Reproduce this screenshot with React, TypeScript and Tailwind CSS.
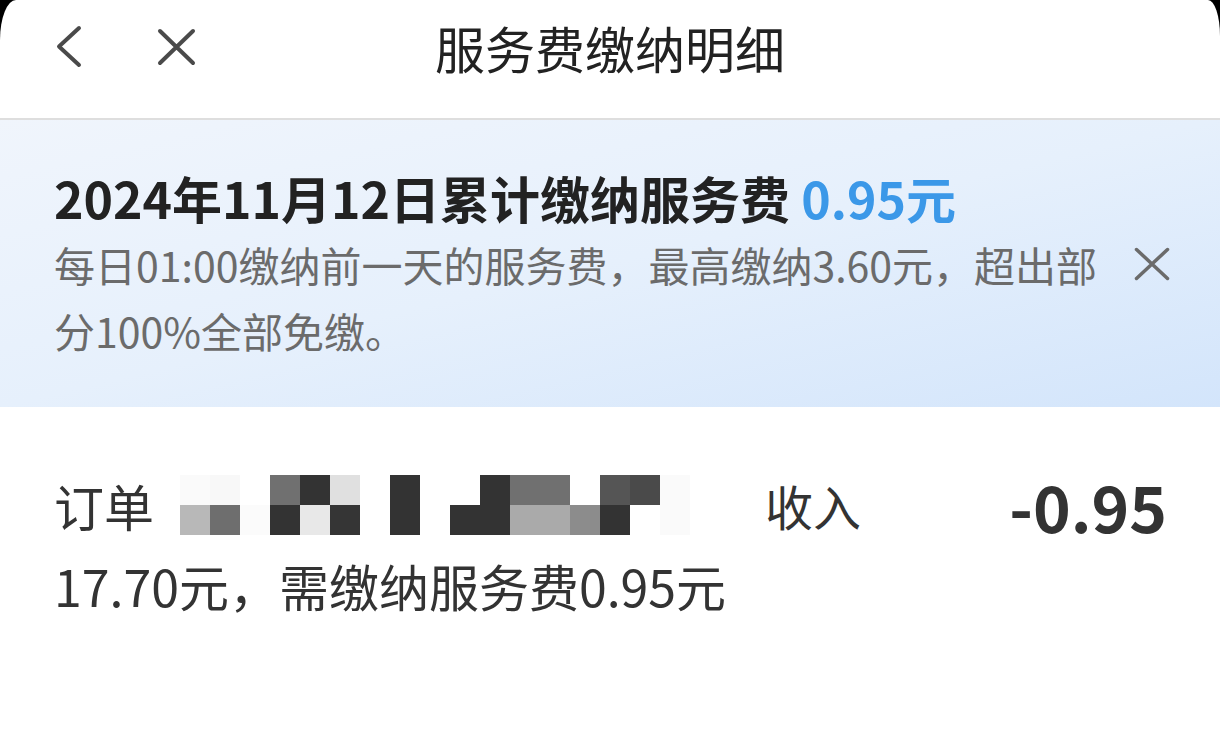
import React from 'react';

const font = "font-['Noto_Sans_CJK_SC','Noto_Sans',sans-serif]";

// mosaic over the order number, two rows of 30px cells
const mosaicTop = [
    'bg-[#fafafa]', 'bg-[#f8f8f8]', 'bg-white', 'bg-[#707070]', 'bg-[#333333]', 'bg-[#e0e0e0]',
    'bg-white', 'bg-[#333333]', 'bg-white', 'bg-white', 'bg-[#333333]', 'bg-[#707070]',
    'bg-[#707070]', 'bg-white', 'bg-[#555555]', 'bg-[#4a4a4a]', 'bg-[#fafafa]',
];
const mosaicBottom = [
    'bg-[#b8b8b8]', 'bg-[#6e6e6e]', 'bg-[#fbfbfb]', 'bg-[#333333]', 'bg-[#e8e8e8]', 'bg-[#353535]',
    'bg-white', 'bg-[#333333]', 'bg-white', 'bg-[#333333]', 'bg-[#333333]', 'bg-[#aaaaaa]',
    'bg-[#aaaaaa]', 'bg-[#8c8c8c]', 'bg-[#333333]', 'bg-white', 'bg-[#fafafa]',
];

function Mosaic() {
    return (
        <div className="flex flex-col">
            <div className="flex">
                {mosaicTop.map((c, i) => (
                    <div key={i} className={`w-[30px] h-[30px] ${c}`} />
                ))}
            </div>
            <div className="flex">
                {mosaicBottom.map((c, i) => (
                    <div key={i} className={`w-[30px] h-[30px] ${c}`} />
                ))}
            </div>
        </div>
    );
}

export default function App() {
    return (
        <div className={`w-[1220px] h-[745px] bg-black overflow-hidden ${font}`}>
            <div className="h-full bg-white rounded-tl-[16px_40px] rounded-tr-[12px_36px] flex flex-col">
                {/* Header */}
                <div className="h-[120px] border-b-2 border-[#dedede] shrink-0">
                    <div className="h-[94px] grid grid-cols-[1fr_auto_1fr] items-center">
                        <div className="flex items-center">
                            <svg width="28" height="46" viewBox="0 0 28 46" className="ml-[55px]">
                                <path d="M24 4 L4 22.5 L24 41" fill="none" stroke="#4a4a4a" strokeWidth="4" strokeLinecap="round" strokeLinejoin="round" />
                            </svg>
                            <svg width="41" height="40" viewBox="0 0 41 40" className="ml-[73px]">
                                <path d="M4 4 L37 36 M37 4 L4 36" fill="none" stroke="#4a4a4a" strokeWidth="4" strokeLinecap="round" />
                            </svg>
                        </div>
                        <h1 className="text-[50px] leading-none text-[#222222] font-normal">服务费缴纳明细</h1>
                        <div />
                    </div>
                </div>

                {/* Notice banner */}
                <div className="shrink-0 h-[287px] bg-gradient-to-br from-[#f0f5fc] via-[#e6f0fc] to-[#d3e5fb] pl-[54px] pr-[49px] pt-[45px]">
                    <div className="text-[50px] leading-[64px] font-bold text-[#222222] whitespace-nowrap">
                        2024年11月12日累计缴纳服务费 <span className="text-[#3b98e8]">0.95元</span>
                    </div>
                    <div className="mt-[2px] flex items-start justify-between">
                        <p className="text-[41px] leading-[66px] text-[#6b6b6b] whitespace-nowrap">
                            每日01:00缴纳前一天的服务费，最高缴纳3.60元，超出部
                            <br />
                            分100%全部免缴。
                        </p>
                        <svg width="38" height="36" viewBox="0 0 38 36" className="mt-[15px] shrink-0">
                            <path d="M3.5 3.5 L34.5 32.5 M34.5 3.5 L3.5 32.5" fill="none" stroke="#6b6b6b" strokeWidth="3.5" strokeLinecap="round" />
                        </svg>
                    </div>
                </div>

                {/* Order item */}
                <div className="pl-[54px] pr-[53px] pt-[66px]">
                    <div className="flex items-center h-[64px]">
                        <span className="w-[126px] text-[50px] leading-none text-[#333333]">订单</span>
                        <Mosaic />
                        <span className="ml-[75px] text-[48px] leading-none text-[#333333]">收入</span>
                        <span className="ml-auto text-[64px] leading-none font-bold text-[#333333]">-0.95</span>
                    </div>
                    <div className="mt-[16px] h-[64px] flex items-center text-[50px] text-[#333333] whitespace-nowrap">
                        17.70元，需缴纳服务费0.95元
                    </div>
                </div>
            </div>
        </div>
    );
}
